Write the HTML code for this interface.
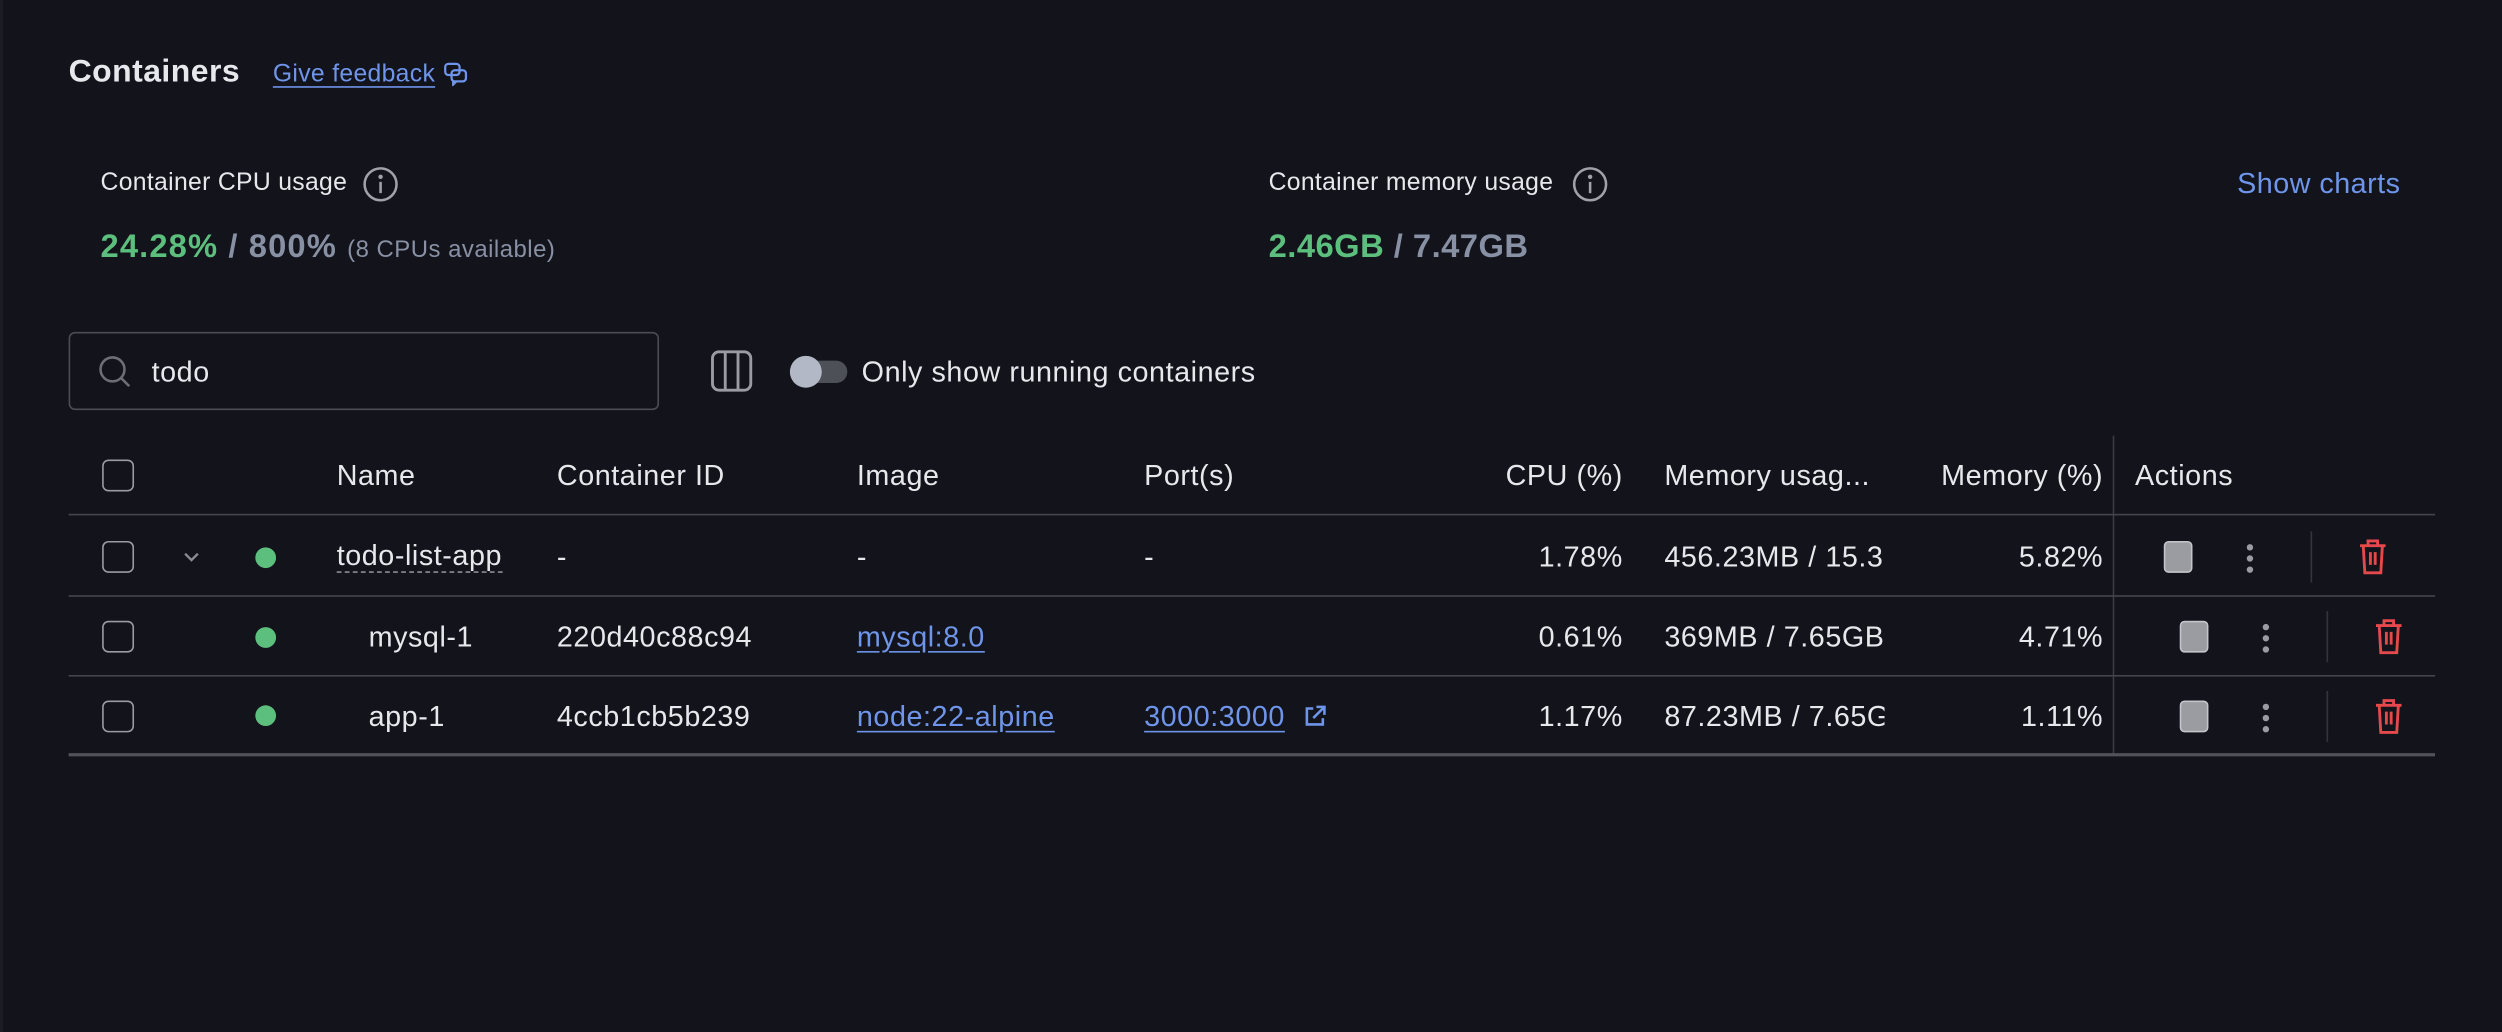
<!DOCTYPE html>
<html><head><meta charset="utf-8"><style>
html,body{margin:0;padding:0;background:#12131b;overflow:hidden;width:2502px;height:1032px}
#w{position:absolute;left:0;top:0;width:1568px;height:647px;transform:scale(1.5957);transform-origin:0 0;font-family:"Liberation Sans",sans-serif;color:#e7e8ec}
.a{position:absolute;white-space:nowrap}
.t{font-size:18px;line-height:20px;letter-spacing:.35px}
.hl{position:absolute;left:43px;width:1483px;height:1px;background:#3b3d45}
.cb{position:absolute;left:64px;width:18px;height:18px;border:1.5px solid #9a9ca4;border-radius:4px}
.dot{position:absolute;left:160px;width:13px;height:13px;border-radius:50%;background:#5dbf7d}
.lk{color:#6f95ea;text-decoration:underline;text-underline-offset:3px}
.r{text-align:right}
.stop{position:absolute;width:16px;height:18px;background:#9b9ca2;border:1px solid #c4c5ca;border-radius:3px}
.dots{position:absolute;width:4px}
.dots i{display:block;width:4px;height:4px;border-radius:50%;background:#9b9ca2;margin-bottom:3px}
.vd{position:absolute;width:1px;height:32px;background:#33353d}
.s{font-size:15.5px;letter-spacing:.2px}
</style></head><body><div id="w">
<div style="position:absolute;left:0;top:0;width:2px;height:647px;background:#1c1d25"></div>
<div class="a" style="left:43px;top:34px;font-size:20px;font-weight:bold;letter-spacing:.3px">Containers</div>
<div class="a lk s" style="left:171px;top:38px">Give feedback</div>
<svg class="a" style="left:278px;top:39px" width="15" height="15" viewBox="0 0 15 15" fill="none" stroke="#6f95ea" stroke-width="1.4"><rect x="1" y="1" width="9" height="7" rx="2"/><rect x="5" y="5" width="9" height="7" rx="2"/><path d="M6 12v2l2-2"/></svg>

<div class="a s" style="left:63px;top:106px">Container CPU usage</div>
<svg class="a" style="left:227px;top:104px" width="23" height="23" viewBox="0 0 23 23" fill="none" stroke="#a0a2a9" stroke-width="1.6"><circle cx="11.5" cy="11.5" r="10"/><path d="M11.5 10v7"/><circle cx="11.5" cy="6.8" r=".6" fill="#a0a2a9"/></svg>
<div class="a" style="left:63px;top:143px;font-size:20.5px;font-weight:bold;letter-spacing:.7px"><span style="color:#5dbf7d">24.28%</span><span style="color:#8890a4"> / 800%</span> <span style="font-size:15px;font-weight:normal;color:#8890a4;letter-spacing:.3px">(8 CPUs available)</span></div>

<div class="a s" style="left:795px;top:106px">Container memory usage</div>
<svg class="a" style="left:985px;top:104px" width="23" height="23" viewBox="0 0 23 23" fill="none" stroke="#a0a2a9" stroke-width="1.6"><circle cx="11.5" cy="11.5" r="10"/><path d="M11.5 10v7"/><circle cx="11.5" cy="6.8" r=".6" fill="#a0a2a9"/></svg>
<div class="a" style="left:795px;top:143px;font-size:20.5px;font-weight:bold;letter-spacing:.3px"><span style="color:#5dbf7d">2.46GB</span><span style="color:#8890a4"> / 7.47GB</span></div>
<div class="a" style="left:1402px;top:105px;font-size:18px;letter-spacing:.3px;color:#6f95ea">Show charts</div>

<div class="a" style="left:43px;top:208px;width:368px;height:47px;border:1.5px solid #4b4d55;border-radius:4px"></div>
<svg class="a" style="left:61px;top:222px" width="22" height="22" viewBox="0 0 22 22" fill="none" stroke="#6c6f78" stroke-width="1.6"><circle cx="9.5" cy="9.5" r="7.5"/><path d="M15 15l5 5"/></svg>
<div class="a t" style="left:95px;top:223px">todo</div>
<svg class="a" style="left:445px;top:219px" width="27" height="27" viewBox="0 0 27 27" fill="none" stroke="#9a9ca4" stroke-width="1.8"><rect x="1.5" y="1.5" width="24" height="24" rx="4"/><path d="M9.5 2v23M17.5 2v23"/></svg>
<div class="a" style="left:497px;top:226px;width:34px;height:14px;border-radius:7px;background:#4e5058"></div>
<div class="a" style="left:495px;top:223px;width:20px;height:20px;border-radius:50%;background:#b2b8c6"></div>
<div class="a t" style="left:540px;top:223px;letter-spacing:.35px">Only show running containers</div>

<div class="a" style="left:1324px;top:273px;width:1px;height:200px;background:#3b3d45"></div>
<div class="hl" style="top:322px;background:#44464e"></div>
<div class="hl" style="top:373px;background:#44464e"></div>
<div class="hl" style="top:423px;background:#44464e"></div>
<div class="hl" style="top:472px;height:2px;background:#50535c"></div>

<div class="cb" style="top:288px"></div>
<div class="a t" style="left:211px;top:288px">Name</div>
<div class="a t" style="left:349px;top:288px">Container ID</div>
<div class="a t" style="left:537px;top:288px">Image</div>
<div class="a t" style="left:717px;top:288px">Port(s)</div>
<div class="a t r" style="left:900px;width:117px;top:288px">CPU (%)</div>
<div class="a t" style="left:1043px;top:288px">Memory usag...</div>
<div class="a t r" style="left:1190px;width:128px;top:288px">Memory (%)</div>
<div class="a t" style="left:1338px;top:288px">Actions</div>

<!-- row 1 -->
<div class="cb" style="top:339px"></div>
<svg class="a" style="left:114px;top:344px" width="12" height="10" viewBox="0 0 12 10" fill="none" stroke="#8a8c94" stroke-width="1.5"><path d="M2 3l4 4 4-4"/></svg>
<div class="dot" style="top:343px"></div>
<div class="a t" style="left:211px;top:339px;border-bottom:1.5px dashed #8a8c94;line-height:19px">todo-list-app</div>
<div class="a t" style="left:349px;top:339px">-</div>
<div class="a t" style="left:537px;top:339px">-</div>
<div class="a t" style="left:717px;top:339px">-</div>
<div class="a t r" style="left:900px;width:117px;top:339px">1.78%</div>
<div class="a t" style="left:1043px;top:339px;width:138px;overflow:hidden">456.23MB / 15.31GB</div>
<div class="a t r" style="left:1200px;width:118px;top:339px">5.82%</div>
<div class="stop" style="left:1356px;top:339px"></div>
<div class="dots" style="left:1408px;top:341px"><i></i><i></i><i></i></div>
<div class="vd" style="left:1448px;top:333px"></div>
<svg class="a" style="left:1477px;top:337px" width="20" height="24" viewBox="0 0 20 24" fill="none" stroke="#e5484d" stroke-width="1.8"><path d="M2 5h16M7 5V2h6v3M4 5l1 17h10l1-17M8.5 9v8M11.5 9v8"/></svg>

<!-- row 2 -->
<div class="cb" style="top:389px"></div>
<div class="dot" style="top:393px"></div>
<div class="a t" style="left:231px;top:389px">mysql-1</div>
<div class="a t" style="left:349px;top:389px">220d40c88c94</div>
<div class="a t lk" style="left:537px;top:389px">mysql:8.0</div>
<div class="a t r" style="left:900px;width:117px;top:389px">0.61%</div>
<div class="a t" style="left:1043px;top:389px;width:138px;overflow:hidden">369MB / 7.65GB</div>
<div class="a t r" style="left:1200px;width:118px;top:389px">4.71%</div>
<div class="stop" style="left:1366px;top:389px"></div>
<div class="dots" style="left:1418px;top:391px"><i></i><i></i><i></i></div>
<div class="vd" style="left:1458px;top:383px"></div>
<svg class="a" style="left:1487px;top:387px" width="20" height="24" viewBox="0 0 20 24" fill="none" stroke="#e5484d" stroke-width="1.8"><path d="M2 5h16M7 5V2h6v3M4 5l1 17h10l1-17M8.5 9v8M11.5 9v8"/></svg>

<!-- row 3 -->
<div class="cb" style="top:439px"></div>
<div class="dot" style="top:442px"></div>
<div class="a t" style="left:231px;top:439px">app-1</div>
<div class="a t" style="left:349px;top:439px">4ccb1cb5b239</div>
<div class="a t lk" style="left:537px;top:439px">node:22-alpine</div>
<div class="a t lk" style="left:717px;top:439px">3000:3000</div>
<svg class="a" style="left:816px;top:441px" width="16" height="16" viewBox="0 0 16 16" fill="none" stroke="#6f95ea" stroke-width="1.6"><path d="M7 3H3v10h10V9M9 2h5v5M14 2L7 9"/></svg>
<div class="a t r" style="left:900px;width:117px;top:439px">1.17%</div>
<div class="a t" style="left:1043px;top:439px;width:138px;overflow:hidden">87.23MB / 7.65GB</div>
<div class="a t r" style="left:1200px;width:118px;top:439px">1.11%</div>
<div class="stop" style="left:1366px;top:439px"></div>
<div class="dots" style="left:1418px;top:441px"><i></i><i></i><i></i></div>
<div class="vd" style="left:1458px;top:433px"></div>
<svg class="a" style="left:1487px;top:437px" width="20" height="24" viewBox="0 0 20 24" fill="none" stroke="#e5484d" stroke-width="1.8"><path d="M2 5h16M7 5V2h6v3M4 5l1 17h10l1-17M8.5 9v8M11.5 9v8"/></svg>
</div></body></html>
